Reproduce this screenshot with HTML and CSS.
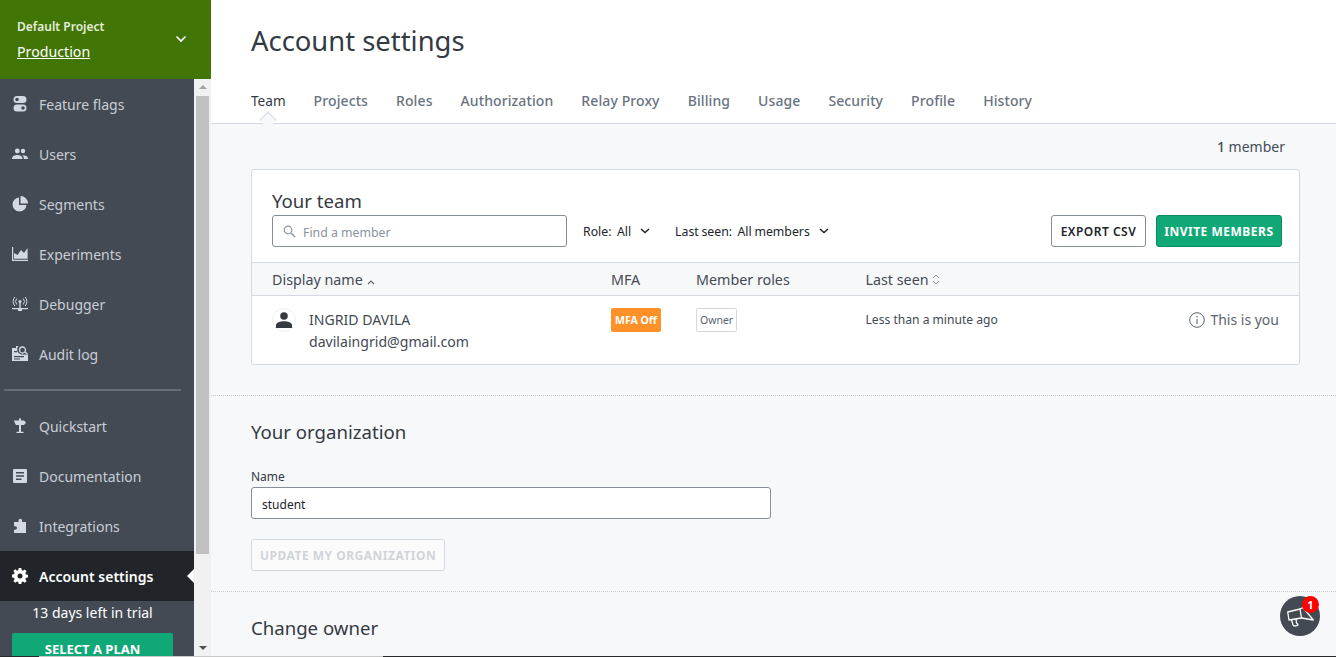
FILE: index.html
```html
<!DOCTYPE html>
<html lang="en">
<head>
    <meta charset="UTF-8">
    <title>Account settings</title>
    <link rel="stylesheet" href="styles.css">
</head>
<body>
    <aside class="sidebar">
        <div class="project">
            <div>
                <div class="project-name">Default Project</div>
                <a class="project-env" href="#">Production</a>
            </div>
            <svg class="project-caret" width="12" height="8" viewBox="0 0 12 8"><path d="M1.500 1.500 6 6l4.500-4.500" fill="none" stroke="#fff" stroke-width="1.600"/></svg>
        </div>
        <div class="side-body">
            <nav class="side-nav">
                <a class="side-link" href="#">
                    <svg class="side-icon" viewBox="0 0 16 16"><path d="M5 0h6a3.500 3.500 0 0 1 0 7H5a3.500 3.500 0 0 1 0-7Zm0 1.700a1.800 1.800 0 0 0 0 3.600 1.800 1.800 0 0 0 0-3.600ZM5 8.500h6a3.500 3.500 0 0 1 0 7H5a3.500 3.500 0 0 1 0-7Zm6 1.700a1.800 1.800 0 0 0 0 3.600 1.800 1.800 0 0 0 0-3.600Z" fill-rule="evenodd"/></svg>
                    Feature flags
                </a>
                <a class="side-link" href="#">
                    <svg class="side-icon" viewBox="0 0 16 16"><circle cx="5.300" cy="5" r="2.400"/><circle cx="11" cy="5" r="2.200"/><path d="M0 12.500c0-2.400 3-3.500 5.300-3.500s5.200 1.100 5.200 3.500V13H0Zm11.800 .5v-.7c0-1.200-.5-2.200-1.400-3 2.400-.2 5.600 1 5.600 3.200v.5Z"/></svg>
                    Users
                </a>
                <a class="side-link" href="#">
                    <svg class="side-icon" viewBox="0 0 16 16"><path d="M7 1.500a7 7 0 1 0 7.500 7.500H7ZM8.500 0v7.500H16A7.500 7.500 0 0 0 8.500 0Z"/></svg>
                    Segments
                </a>
                <a class="side-link" href="#">
                    <svg class="side-icon" viewBox="0 0 16 16"><path d="M0 1h1.200v12.800H16V15H0Zm2 11.800V7l3.500 2L9 4l3 3 3.600-5v10.800Z"/></svg>
                    Experiments
                </a>
                <a class="side-link" href="#">
                    <svg class="side-icon" viewBox="0 0 16 16"><circle cx="8" cy="5.500" r="1.500"/><path d="M7.300 6.500h1.400V12H7.300ZM0 12h16v1.200H10V15H6v-1.800H0Z"/><path d="M4.800 2.500a4.500 4.500 0 0 0 0 6M11.200 2.500a4.500 4.500 0 0 1 0 6M2.800 1a7 7 0 0 0 0 9M13.200 1a7 7 0 0 1 0 9" fill="none" stroke="#d3d8e2"/></svg>
                    Debugger
                </a>
                <a class="side-link" href="#">
                    <svg class="side-icon" viewBox="0 0 16 16"><path d="M0 2h4V0h2.500a5 5 0 0 0 2.800 8.500H16V15H0Zm2 8v1.300h10V10Zm0-5v1.300h3V5Zm0 7.500v1h6v-1Z" fill-rule="evenodd"/><path d="M10.500 1a3 3 0 1 0 0 6 3 3 0 0 0 0-6ZM13 6l2.500 2" fill="none" stroke="#d3d8e2" stroke-width="1.300"/></svg>
                    Audit log
                </a>
                <div class="side-rule"></div>
                <a class="side-link" href="#">
                    <svg class="side-icon" viewBox="0 0 16 16"><path d="M2 2.500h5V.500h2v2h3l2 2.200-2 2.300H9v6.800h2.500V15h-7v-1.200H7V7H4L2.800 5Z"/></svg>
                    Quickstart
                </a>
                <a class="side-link" href="#">
                    <svg class="side-icon" viewBox="0 0 16 16"><path d="M2 1h12a1 1 0 0 1 1 1v12a1 1 0 0 1-1 1H2a1 1 0 0 1-1-1V2a1 1 0 0 1 1-1Zm2 3v1.500h8V4Zm0 3.200v1.500h8V7.200Zm0 3.300V12h5.500v-1.500Z" fill-rule="evenodd"/></svg>
                    Documentation
                </a>
                <a class="side-link" href="#">
                    <svg class="side-icon" viewBox="0 0 16 16"><path d="M2 4h4.500V2.500a1.800 1.800 0 0 1 3.600 0V4H14v11H2v-3.200h1.200a1.800 1.800 0 0 0 0-3.600H2Z"/></svg>
                    Integrations
                </a>
                <a class="side-link side-link-active" href="#">
                    <svg class="side-icon" viewBox="0 0 16 16"><path d="M6.700 0h2.600l.4 2.100 1.300.6 1.800-1.200 1.800 1.800-1.200 1.800.6 1.300 2 .4v2.600l-2 .4-.6 1.300 1.200 1.800-1.800 1.800-1.800-1.200-1.300.6-.4 2H6.700l-.4-2-1.300-.6-1.800 1.200-1.800-1.800 1.200-1.800-.6-1.300-2-.4V6.600l2-.4.6-1.300-1.200-1.800 1.800-1.800L5 2.700l1.300-.6ZM8 5.500a2.500 2.500 0 1 0 0 5 2.500 2.500 0 0 0 0-5Z" fill-rule="evenodd"/></svg>
                    Account settings
                </a>
                <div class="trial">13 days left in trial</div>
                <a class="plan-btn" href="#">SELECT A PLAN</a>
            </nav>
            <div class="scrollbar">
                <div class="scroll-up"></div>
                <div class="scroll-thumb"></div>
                <div class="scroll-down"></div>
            </div>
        </div>
    </aside>

    <main class="main">
        <header class="page-head">
            <h1>Account settings</h1>
            <div class="tabs">
                <a class="tab tab-active" href="#">Team</a>
                <a class="tab" href="#">Projects</a>
                <a class="tab" href="#">Roles</a>
                <a class="tab" href="#">Authorization</a>
                <a class="tab" href="#">Relay Proxy</a>
                <a class="tab" href="#">Billing</a>
                <a class="tab" href="#">Usage</a>
                <a class="tab" href="#">Security</a>
                <a class="tab" href="#">Profile</a>
                <a class="tab" href="#">History</a>
            </div>
        </header>

        <section class="team-section">
            <div class="member-count"><b>1</b> member</div>
            <div class="card">
                <div class="card-top">
                    <h2>Your team</h2>
                    <div class="toolbar">
                        <label class="search">
                            <svg width="13" height="13" viewBox="0 0 13 13"><circle cx="5" cy="5" r="3.800" fill="none" stroke="#8a93a0" stroke-width="1.200"/><path d="m8 8 4 4" stroke="#8a93a0" stroke-width="1.400"/></svg>
                            <input type="text" placeholder="Find a member">
                        </label>
                        <div class="filter">Role:&nbsp; All
                            <svg width="10" height="6" viewBox="0 0 10 6"><path d="m1 1 4 3.500L9 1" fill="none" stroke="#21252b" stroke-width="1.500"/></svg>
                        </div>
                        <div class="filter">Last seen:&nbsp; All members
                            <svg width="10" height="6" viewBox="0 0 10 6"><path d="m1 1 4 3.500L9 1" fill="none" stroke="#21252b" stroke-width="1.500"/></svg>
                        </div>
                        <div class="toolbar-actions">
                            <button class="btn btn-plain">EXPORT CSV</button>
                            <button class="btn btn-green">INVITE MEMBERS</button>
                        </div>
                    </div>
                </div>
                <div class="team-row team-head">
                    <div class="col-name">Display name
                        <svg width="8" height="5" viewBox="0 0 8 5"><path d="m1 4 3-3 3 3" fill="none" stroke="#5b6470" stroke-width="1.100"/></svg>
                    </div>
                    <div class="col-mfa">MFA</div>
                    <div class="col-roles">Member roles</div>
                    <div class="col-seen">Last seen
                        <svg width="8" height="11" viewBox="0 0 8 11"><path d="m1 4 3-3 3 3M1 7l3 3 3-3" fill="none" stroke="#8a93a0"/></svg>
                    </div>
                </div>
                <div class="team-row team-member">
                    <div class="col-name member-info">
                        <div class="avatar">
                            <svg width="16" height="16" viewBox="0 0 14 14"><circle cx="7" cy="3.500" r="3.300" fill="#343a42"/><path d="M0 14v-2.500C0 9.200 4 8 7 8s7 1.200 7 3.500V14Z" fill="#343a42"/></svg>
                        </div>
                        <div class="member-text">
                            <div class="member-name">INGRID DAVILA</div>
                            <div class="member-mail">davilaingrid@gmail.com</div>
                        </div>
                    </div>
                    <div class="col-mfa"><span class="mfa-tag">MFA Off</span></div>
                    <div class="col-roles"><span class="role-tag">Owner</span></div>
                    <div class="col-seen seen-text">Less than a minute ago</div>
                    <div class="you">
                        <svg width="16" height="16" viewBox="0 0 16 16"><circle cx="8" cy="8" r="7.300" fill="none" stroke="#5b6470"/><path d="M7.200 7h1.600v5H7.200ZM7.200 4h1.600v1.600H7.200Z" fill="#8a93a0"/></svg>
                        This is you
                    </div>
                </div>
            </div>
        </section>

        <section class="org-section">
            <h3>Your organization</h3>
            <label class="field-label" for="orgName">Name</label>
            <input class="field-input" id="orgName" type="text" value="student">
            <button class="btn btn-disabled" disabled>UPDATE MY ORGANIZATION</button>
        </section>

        <section class="owner-section">
            <h3>Change owner</h3>
        </section>

        <div class="launcher">
            <svg width="27" height="20" viewBox="0 0 27 20"><g fill="none" stroke="#fff" stroke-width="1.300" stroke-linejoin="round"><path d="M.7 5 13 2l1.500 9L2 13Z"/><path d="M13 2 16 .7 26.300 13l-11.800-2"/><path d="m4.500 12.500 1.500 5.500c.5 1.500 5 1.200 5-.5l-1.500-1.500-.5-4"/></g></svg>
            <span class="launcher-badge">1</span>
        </div>
    </main>

    <div class="window-edge">
        <span class="edge-dark"></span>
        <span class="edge-light"></span>
        <span class="edge-rest"></span>
    </div>
</body>
</html>
```

FILE: styles.css
```css
* {
    box-sizing: border-box;
}

html, body {
    height: 100%;
}

body {
    margin: 0;
    display: flex;
    overflow: hidden;
    font-family: "Noto Sans", "Open Sans", Arial, sans-serif;
    font-size: 14px;
    color: #21252b;
    background-color: #f7f8fa;
}

a {
    text-decoration: none;
    color: inherit;
}

/* sidebar */
.sidebar {
    width: 211px;
    flex: none;
    display: flex;
    flex-direction: column;
    height: 657px;
    background-color: #434a54;
}

.project {
    height: 79px;
    flex: none;
    background-color: #417505;
    color: #fff;
    display: flex;
    align-items: center;
    justify-content: space-between;
    padding: 0 24px 1px 17px;
}

.project-name {
    font-size: 12px;
    font-weight: 600;
    color: #e6eddd;
    margin-bottom: 7px;
}

.project-env {
    font-size: 14.200px;
    color: #fff;
    text-decoration: underline;
}

.side-body {
    flex: 1;
    display: flex;
    min-height: 0;
}

.side-nav {
    width: 194px;
    overflow: hidden;
}

.side-link {
    height: 50px;
    display: flex;
    align-items: center;
    gap: 11px;
    padding-left: 12px;
    font-size: 14px;
    color: #c9ced6;
    position: relative;
}

.side-icon {
    width: 16px;
    height: 16px;
    flex: none;
    fill: #d3d8e2;
}

.side-rule {
    height: 2px;
    margin: 10px 13px 10px 4px;
    background-color: #656d78;
}

.side-link-active {
    background-color: #212529;
    color: #fff;
    font-weight: 600;
}

.side-link-active .side-icon {
    fill: #fff;
}

.side-link-active::after {
    content: "";
    position: absolute;
    right: 0;
    top: 18px;
    border: 7px solid transparent;
    border-left-width: 0;
    border-right-color: #fff;
}

.trial {
    text-align: center;
    padding-right: 9px;
    color: #fff;
    font-size: 14px;
    line-height: 24px;
}

.plan-btn {
    display: block;
    margin: 8px 21px 0 12px;
    height: 24px;
    padding-top: 8px;
    line-height: 16px;
    background-color: #10a877;
    border-radius: 2px 2px 0 0;
    color: #fff;
    font-size: 13px;
    font-weight: 700;
    text-align: center;
}

.scrollbar {
    width: 17px;
    background-color: #f1f1f1;
    display: flex;
    flex-direction: column;
}

.scroll-up, .scroll-down {
    height: 17px;
    flex: none;
    position: relative;
}

.scroll-down {
    margin-top: auto;
}

.scroll-up::after, .scroll-down::after {
    content: "";
    position: absolute;
    left: 5px;
    top: 6px;
    border: 4px solid transparent;
    border-top-width: 0;
    border-bottom: 4px solid #a3a3a3;
}

.scroll-down::after {
    border-bottom-width: 0;
    border-top: 4px solid #505050;
}

.scroll-thumb {
    height: 458px;
    margin: 0 2px;
    background-color: #c1c1c1;
}

/* main */
.main {
    flex: 1;
    min-width: 0;
    height: 657px;
    overflow: hidden;
    position: relative;
}

.page-head {
    height: 124px;
    background-color: #fff;
    border-bottom: 1px solid #d4d8e0;
    padding: 0 40px;
}

h1 {
    margin: 0;
    padding-top: 22px;
    font-size: 27.400px;
    line-height: 38px;
    font-weight: 400;
    color: #343a42;
}

.tabs {
    display: flex;
    gap: 28px;
    margin-top: 30px;
}

.tab {
    font-size: 14px;
    line-height: 22px;
    letter-spacing: 0.100px;
    color: #697380;
    font-weight: 500;
    position: relative;
}

.tab-active {
    color: #343a42;
    font-size: 13.600px;
    font-weight: 400;
    letter-spacing: 0;
}

.tab-active::after {
    content: "";
    position: absolute;
    left: 11px;
    top: 24px;
    width: 11px;
    height: 11px;
    background-color: #f7f8fa;
    border: 1px solid #d4d8e0;
    border-right: 0;
    border-bottom: 0;
    transform: rotate(45deg);
}

.team-section {
    padding: 13px 36px 30px 40px;
    border-bottom: 1px dotted #c9ced6;
    height: 272px;
}

.member-count {
    text-align: right;
    padding-right: 15px;
    line-height: 20px;
    font-size: 14px;
    color: #434a54;
    margin-bottom: 12px;
}

.member-count b {
    font-weight: 500;
}

.card {
    background-color: #fff;
    border: 1px solid #d4d8e0;
    border-radius: 3px;
}

.card-top {
    padding: 18px 17px 15px 20px;
}

h2 {
    margin: 0 0 1px;
    font-size: 18.600px;
    line-height: 26px;
    font-weight: 400;
    color: #343a42;
}

.toolbar {
    display: flex;
    align-items: center;
}

.search {
    width: 295px;
    height: 32px;
    display: flex;
    align-items: center;
    gap: 7px;
    padding: 0 10px;
    border: 1px solid #858d99;
    border-radius: 3px;
}

.search input {
    border: 0;
    outline: 0;
    padding: 2px 0 0;
    flex: 1;
    min-width: 0;
    font: inherit;
    font-size: 12.300px;
}

.search input::placeholder {
    color: #8a93a0;
}

.filter {
    margin-left: 16px;
    margin-right: 9px;
    font-size: 12.300px;
    word-spacing: -0.500px;
    display: flex;
    align-items: center;
    gap: 9px;
    white-space: nowrap;
}

.toolbar-actions {
    margin-left: auto;
    display: flex;
    gap: 10px;
}

.btn {
    height: 32px;
    padding: 0 8px;
    border-radius: 3px;
    font-family: inherit;
    font-size: 12px;
    font-weight: 600;
    letter-spacing: 0.500px;
}

.btn-plain {
    padding: 0 8.500px;
    background-color: #fff;
    border: 1px solid #858d99;
    color: #21252b;
}

.btn-green {
    padding: 0 7.500px;
    background-color: #10a877;
    border: 1px solid #0c8a61;
    color: #fff;
    font-weight: 700;
}

.btn-disabled {
    display: block;
    background-color: #fbfbfc;
    border: 1px solid #d4d8e0;
    color: #d0d4da;
    font-weight: 700;
}

.team-row {
    display: flex;
    padding-left: 20px;
}

.team-head {
    height: 34px;
    align-items: center;
    background-color: #f7f8fa;
    border-top: 1px solid #d4d8e0;
    border-bottom: 1px solid #d4d8e0;
    font-size: 14.300px;
    color: #434a54;
}

.team-member {
    height: 68px;
    padding-top: 12px;
    position: relative;
}

.col-name {
    width: 339px;
    flex: none;
}

.col-mfa {
    width: 85px;
    flex: none;
}

.col-roles {
    width: 169.500px;
    flex: none;
}

.member-info {
    display: flex;
    gap: 13px;
}

.avatar {
    width: 24px;
    height: 24px;
    flex: none;
    display: flex;
    align-items: center;
    justify-content: center;
    border: 1px solid #eef0f2;
    border-radius: 50%;
}

.member-text {
    padding-top: 1px;
}

.member-name, .member-mail {
    font-size: 14.100px;
    line-height: 22px;
    color: #434a54;
}

.mfa-tag {
    display: inline-block;
    height: 24px;
    line-height: 24px;
    padding: 0 4px;
    background-color: #ff9129;
    border-radius: 2px;
    color: #fff;
    font-size: 10.500px;
    font-weight: 700;
}

.role-tag {
    display: inline-block;
    height: 24px;
    line-height: 22px;
    padding: 0 3px;
    border: 1px solid #d4d8e0;
    border-radius: 2px;
    color: #5b6470;
    font-size: 10.500px;
}

.seen-text {
    font-size: 12.100px;
    line-height: 24px;
    color: #434a54;
}

.you {
    position: absolute;
    right: 20px;
    top: 12px;
    display: flex;
    align-items: center;
    gap: 5px;
    color: #5b6470;
    line-height: 24px;
}

.org-section {
    height: 196px;
    padding: 23px 40px 0;
    border-bottom: 1px dotted #c9ced6;
}

h3 {
    margin: 0;
    font-size: 18.600px;
    line-height: 26px;
    font-weight: 400;
    color: #343a42;
}

.field-label {
    display: block;
    margin-top: 23px;
    font-size: 12px;
    line-height: 18px;
    color: #343a42;
}

.field-input {
    display: block;
    width: 520px;
    height: 32px;
    margin: 1px 0 20px;
    padding: 2px 10px 0;
    border: 1px solid #858d99;
    border-radius: 3px;
    font: inherit;
    font-size: 12px;
    color: #21252b;
}

.owner-section {
    padding: 23px 40px 0;
}

.launcher {
    position: absolute;
    left: 1069px;
    top: 596px;
    width: 40px;
    height: 40px;
    border-radius: 50%;
    background-color: #434a54;
    display: flex;
    align-items: center;
    justify-content: center;
    padding-top: 2px;
}

.launcher-badge {
    position: absolute;
    right: 1px;
    top: 0;
    width: 17px;
    height: 17px;
    border-radius: 50%;
    background-color: #f00;
    color: #fff;
    font-size: 11px;
    font-weight: 700;
    line-height: 17px;
    text-align: center;
}

/* 1px edge along the bottom of the window */
.window-edge {
    position: absolute;
    left: 0;
    right: 0;
    bottom: 0;
    height: 1px;
    display: flex;
}

.edge-dark {
    width: 39px;
    background-color: #26282b;
}

.edge-light {
    width: 344px;
    background-color: #c8c8c8;
}

.edge-rest {
    flex: 1;
    background-color: #26282b;
}
```
